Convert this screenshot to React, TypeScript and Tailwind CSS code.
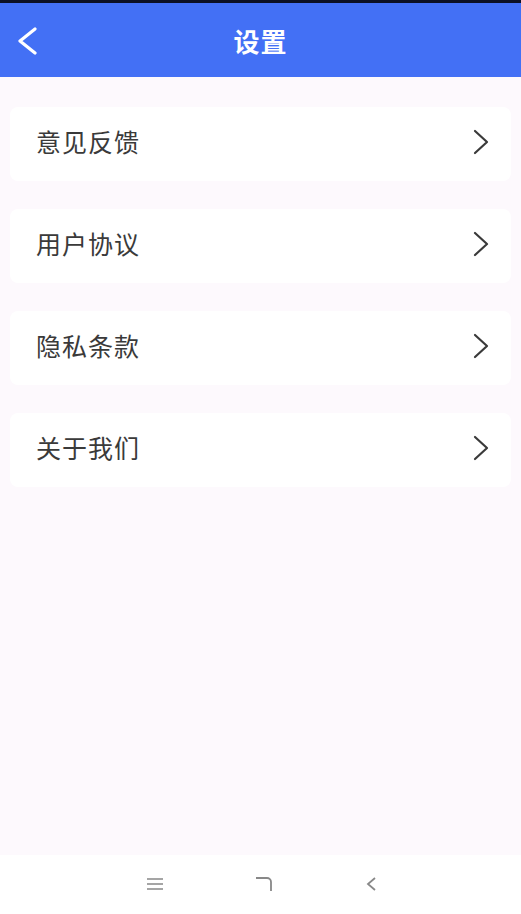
const items = ['意见反馈', '用户协议', '隐私条款', '关于我们']

export default function App() {
  return (
    <div
      className="flex h-[914px] w-[521px] flex-col overflow-hidden bg-[#fdf9fd]"
      style={{ fontFamily: '"Noto Sans CJK SC", "Noto Sans", sans-serif' }}
    >
      <div className="h-[3px] bg-[#0c1024]" />
      {/* Header */}
      <div className="relative flex h-[74px] items-center justify-center bg-[#4370f5]">
        <svg width="22" height="28" viewBox="0 0 22 28" className="absolute left-[16px] top-[24px] text-white">
          <path d="M19 2L4 14l15 12" stroke="currentColor" strokeWidth="3.2" fill="none" strokeLinecap="round" strokeLinejoin="round" />
        </svg>
        <h1 className="text-[26px] font-bold tracking-[1px] text-white">设置</h1>
      </div>

      {/* List */}
      <div className="flex flex-1 flex-col gap-[28px] px-[10px] pt-[30px]">
        {items.map(label => (
          <div
            key={label}
            className="flex h-[74px] items-center justify-between rounded-[8px] bg-white pb-[4px] pl-[26px] pr-[22px]"
          >
            <span className="text-[25px] tracking-[1px] text-[#3a3a3a]">{label}</span>
            <svg width="17" height="26" viewBox="0 0 17 26" className="text-[#3a3a3a]">
              <path d="M3 2l12 11L3 24" stroke="currentColor" strokeWidth="2.2" fill="none" strokeLinecap="round" strokeLinejoin="round" />
            </svg>
          </div>
        ))}
      </div>

      {/* System nav */}
      <div className="flex h-[59px] items-center bg-white pb-[2px]">
        <div className="flex w-full items-center justify-center gap-[90px] pl-[2px]">
          <svg width="18" height="14" viewBox="0 0 18 14" className="text-[#888]">
            <path d="M1 2h16M1 7h16M1 12h16" stroke="currentColor" strokeWidth="1.6" />
          </svg>
          <svg width="20" height="18" viewBox="0 0 20 18" className="text-[#888]">
            <path d="M2 3h11a4 4 0 0 1 4 4v9" stroke="currentColor" strokeWidth="1.8" fill="none" />
          </svg>
          <svg width="14" height="16" viewBox="0 0 14 16" className="text-[#888]">
            <path d="M11 2L4 8l7 6" stroke="currentColor" strokeWidth="1.8" fill="none" />
          </svg>
        </div>
      </div>
    </div>
  )
}
